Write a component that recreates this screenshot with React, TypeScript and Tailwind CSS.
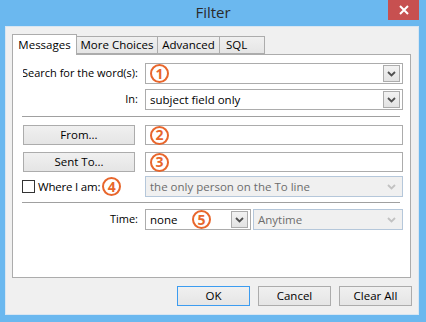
import React from 'react';

const font = { fontFamily: '"Open Sans", "Noto Sans", sans-serif' };

const Num = ({ n }: { n: number }) => (
  <div className="w-[19px] h-[19px] shrink-0 rounded-full border-2 border-[#e8662c] flex items-center justify-center text-[14px] font-bold leading-none text-[#e8662c]">
    {n}
  </div>
);

const Chevron = ({ disabled }: { disabled?: boolean }) => (
  <svg width="9" height="6" viewBox="0 0 9 6">
    <polyline
      points="1,1 4.5,4.5 8,1"
      fill="none"
      stroke={disabled ? '#c2c2c2' : '#505050'}
      strokeWidth="1.8"
    />
  </svg>
);

const DropBtn = ({ disabled }: { disabled?: boolean }) =>
  disabled ? (
    <div className="w-[17px] h-[17px] flex items-center justify-center">
      <Chevron disabled />
    </div>
  ) : (
    <div className="w-[17px] h-[17px] flex items-center justify-center border border-[#acacac] bg-gradient-to-b from-[#f2f2f2] to-[#e3e3e3]">
      <Chevron />
    </div>
  );

const Btn = ({ label, primary, className }: { label: string; primary?: boolean; className?: string }) => (
  <div
    className={`h-[20px] flex items-center justify-center text-[11.5px] text-black bg-gradient-to-b from-[#f0f0f0] to-[#e5e5e5] border ${
      primary ? 'border-[#3c9cf0]' : 'border-[#acacac]'
    } ${className ?? ''}`}
  >
    {label}
  </div>
);

const Label = ({ children }: { children: React.ReactNode }) => (
  <div className="w-[115px] shrink-0 overflow-hidden flex justify-end whitespace-nowrap text-[11px] mr-[1px]">
    {children}
  </div>
);

export default function App() {
  return (
    <div className="w-[426px] h-[322px] bg-[#6bb8ef] flex flex-col select-none" style={font}>
      {/* title bar */}
      <div className="relative h-[26px] flex items-start justify-center">
        <div className="pt-[1px] text-[15px] text-[#2b2b2b]">Filter</div>
        <div className="absolute top-0 right-[7px] w-[31px] h-[20px] bg-[#c75050] flex items-center justify-center">
          <svg width="10" height="10" viewBox="0 0 10 10">
            <path d="M1 1 L9 9 M9 1 L1 9" stroke="#fff" strokeWidth="2" />
          </svg>
        </div>
      </div>

      {/* client */}
      <div className="ml-[5px] mr-[7px] mb-[7px] flex-1 bg-[#f0f0f0] border border-[#d8e6f2] flex flex-col pl-[6px] pr-[7px] pt-[7px]">
        {/* tabs */}
        <div className="flex items-end h-[20px] text-[11.5px] text-black whitespace-nowrap">
          <div className="relative z-10 w-[65px] h-[21px] -mb-[1px] bg-white border border-[#acacac] border-b-0 flex items-center justify-center pb-[1px]">
            Messages
          </div>
          <div className="w-[81px] h-[18px] border border-[#acacac] border-l-0 bg-gradient-to-b from-[#f0f0f0] to-[#e5e5e5] flex items-center justify-center">
            More Choices
          </div>
          <div className="w-[62px] h-[18px] border border-[#acacac] border-l-0 bg-gradient-to-b from-[#f0f0f0] to-[#e5e5e5] flex items-center justify-center">
            Advanced
          </div>
          <div className="w-[45px] h-[18px] border border-[#acacac] border-l-0 bg-gradient-to-b from-[#f0f0f0] to-[#e5e5e5] flex items-center pl-[6px]">
            SQL
          </div>
        </div>

        {/* panel */}
        <div className="h-[224px] bg-white border border-[#acacac] pl-[10px] pr-[7px] pt-[8px] flex flex-col text-[11.5px] text-black">
          {/* row 1 */}
          <div className="flex items-center h-[21px]">
            <Label>Search for the word(s):</Label>
            <div className="ml-[6px] flex-1 h-[21px] border border-[#acacac] flex items-center pl-[4px] pr-[2px]">
              <Num n={1} />
              <div className="flex-1" />
              <DropBtn />
            </div>
          </div>
          {/* row 2 */}
          <div className="flex items-center h-[21px] mt-[5px]">
            <Label>In:</Label>
            <div className="ml-[6px] flex-1 h-[21px] border border-[#acacac] flex items-center pl-[4px] pr-[2px]">
              <span className="flex-1">subject field only</span>
              <DropBtn />
            </div>
          </div>

          <div className="mt-[6px] h-[1px] bg-[#a0a0a0] ml-[-1px] mr-[3px]" />

          {/* row 3 */}
          <div className="flex items-center h-[20px] mt-[8px]">
            <Btn label="From..." className="w-[112px]" />
            <div className="ml-[10px] flex-1 h-[20px] border border-[#acacac] flex items-center pl-[4px]">
              <Num n={2} />
            </div>
          </div>
          {/* row 4 */}
          <div className="flex items-center h-[20px] mt-[7px]">
            <Btn label="Sent To..." className="w-[112px]" />
            <div className="ml-[10px] flex-1 h-[20px] border border-[#acacac] flex items-center pl-[4px]">
              <Num n={3} />
            </div>
          </div>
          {/* row 5 */}
          <div className="flex items-center h-[21px] mt-[4px]">
            <div className="w-[122px] shrink-0 flex items-center whitespace-nowrap">
              <div className="ml-[-1px] w-[13px] h-[13px] border border-[#333] bg-white" />
              <span className="ml-[3px] tracking-[-0.2px]">Where I am:</span>
              <div className="ml-[2px]">
                <Num n={4} />
              </div>
            </div>
            <div className="flex-1 h-[21px] border border-[#b5c7da] bg-[#f0f0f0] flex items-center pl-[4px] pr-[2px]">
              <span className="flex-1 text-[#6d6d6d]">the only person on the To line</span>
              <DropBtn disabled />
            </div>
          </div>

          <div className="mt-[5px] h-[1px] bg-[#a0a0a0] ml-[-1px] mr-[3px]" />

          {/* row 6 */}
          <div className="flex items-center h-[21px] mt-[6px]">
            <Label>Time:</Label>
            <div className="ml-[6px] w-[106px] h-[21px] border border-[#acacac] flex items-center pl-[4px] pr-[2px]">
              <span className="w-[42px]">none</span>
              <Num n={5} />
              <div className="flex-1" />
              <DropBtn />
            </div>
            <div className="ml-[2px] flex-1 h-[21px] border border-[#b5c7da] bg-[#f0f0f0] flex items-center pl-[4px] pr-[2px]">
              <span className="flex-1 text-[#6d6d6d]">Anytime</span>
              <DropBtn disabled />
            </div>
          </div>
        </div>

        {/* buttons */}
        <div className="flex justify-end gap-[8px] mt-[8px] mr-[-1px]">
          <Btn label="OK" primary className="w-[73px]" />
          <Btn label="Cancel" className="w-[73px]" />
          <Btn label="Clear All" className="w-[73px]" />
        </div>
      </div>
    </div>
  );
}
